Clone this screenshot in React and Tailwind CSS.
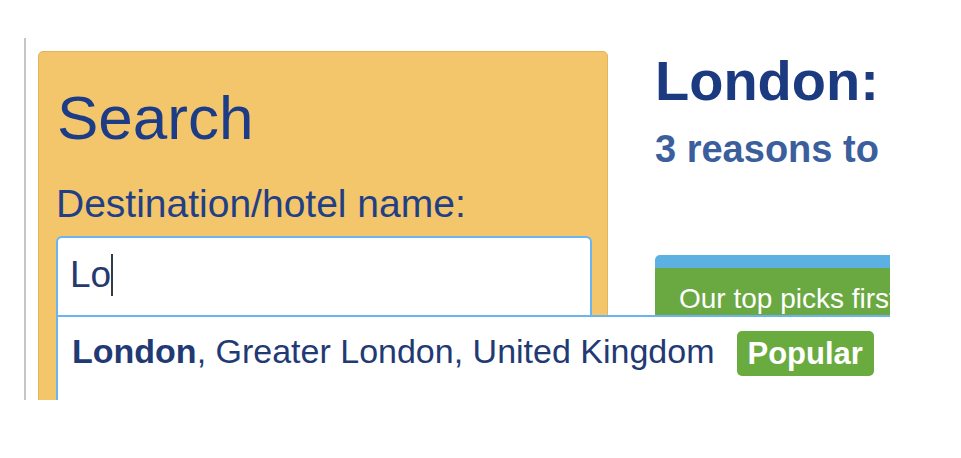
const font = { fontFamily: '"Liberation Sans", Arial, sans-serif' }

const App = () => {
  return (
    <div className="w-[961px] h-[458px] bg-white" style={font}>
      <div className="w-[890px] h-[400px] overflow-hidden pt-[38px] pl-[24px]">
        <div className="flex h-[500px] border-l-2 border-[#c6c6c6] pl-[12px] pt-[13px]">
          <div className="w-[570px] shrink-0 bg-[#f3c66b] border border-[#e3b45a] rounded-t-[5px] px-[17px] pt-[35px]">
            <h2 className="ml-[1px] text-[62px] leading-[62px] text-[#1d3c87]">Search</h2>
            <label className="block mt-[35px] text-[39px] leading-[39px] text-[#223f86]">
              Destination/hotel name:
            </label>
            <div className="relative mt-[13px] w-[536px]">
              <div className="h-[79px] bg-white border-x-2 border-t-2 border-[#6cb4ee] rounded-t-[6px] pl-[12px] pt-[18px] flex items-start">
                <span className="text-[37px] leading-[37px] text-[#26396e]">Lo</span>
                <span className="w-[2px] h-[42px] -mt-[2px] bg-[#333a4a]" />
              </div>
              <div className="absolute left-0 top-full z-10 w-[834px] h-[120px] bg-white border-t-2 border-l-2 border-[#6cb4ee] pl-[14px] pt-[14px] flex items-start">
                <span className="text-[34px] leading-[40px] text-[#223a74] whitespace-nowrap">
                  <b>London</b>, Greater London, United Kingdom
                </span>
                <span className="ml-[22px] h-[45px] bg-[#6aab3f] rounded-[5px] px-[11px] text-[31px] leading-[45px] font-bold text-white">
                  Popular
                </span>
              </div>
            </div>
          </div>
          <div className="ml-[47px] flex-1 min-w-0 pt-[2px]">
            <h1 className="text-[56px] leading-[56px] font-bold text-[#1b3a80] whitespace-nowrap">London:</h1>
            <p className="mt-[21px] text-[38px] leading-[38px] font-bold text-[#3b5e9d] whitespace-nowrap">
              3 reasons to
            </p>
            <div className="mt-[87px] rounded-tl-[5px] overflow-hidden">
              <div className="h-[13px] bg-[#5db1e2]" />
              <div className="h-[80px] bg-[#6aa842] pl-[24px] pt-[14px] text-[28px] leading-[34px] text-white whitespace-nowrap">
                Our top picks first
              </div>
            </div>
          </div>
        </div>
      </div>
    </div>
  )
}

export default App
